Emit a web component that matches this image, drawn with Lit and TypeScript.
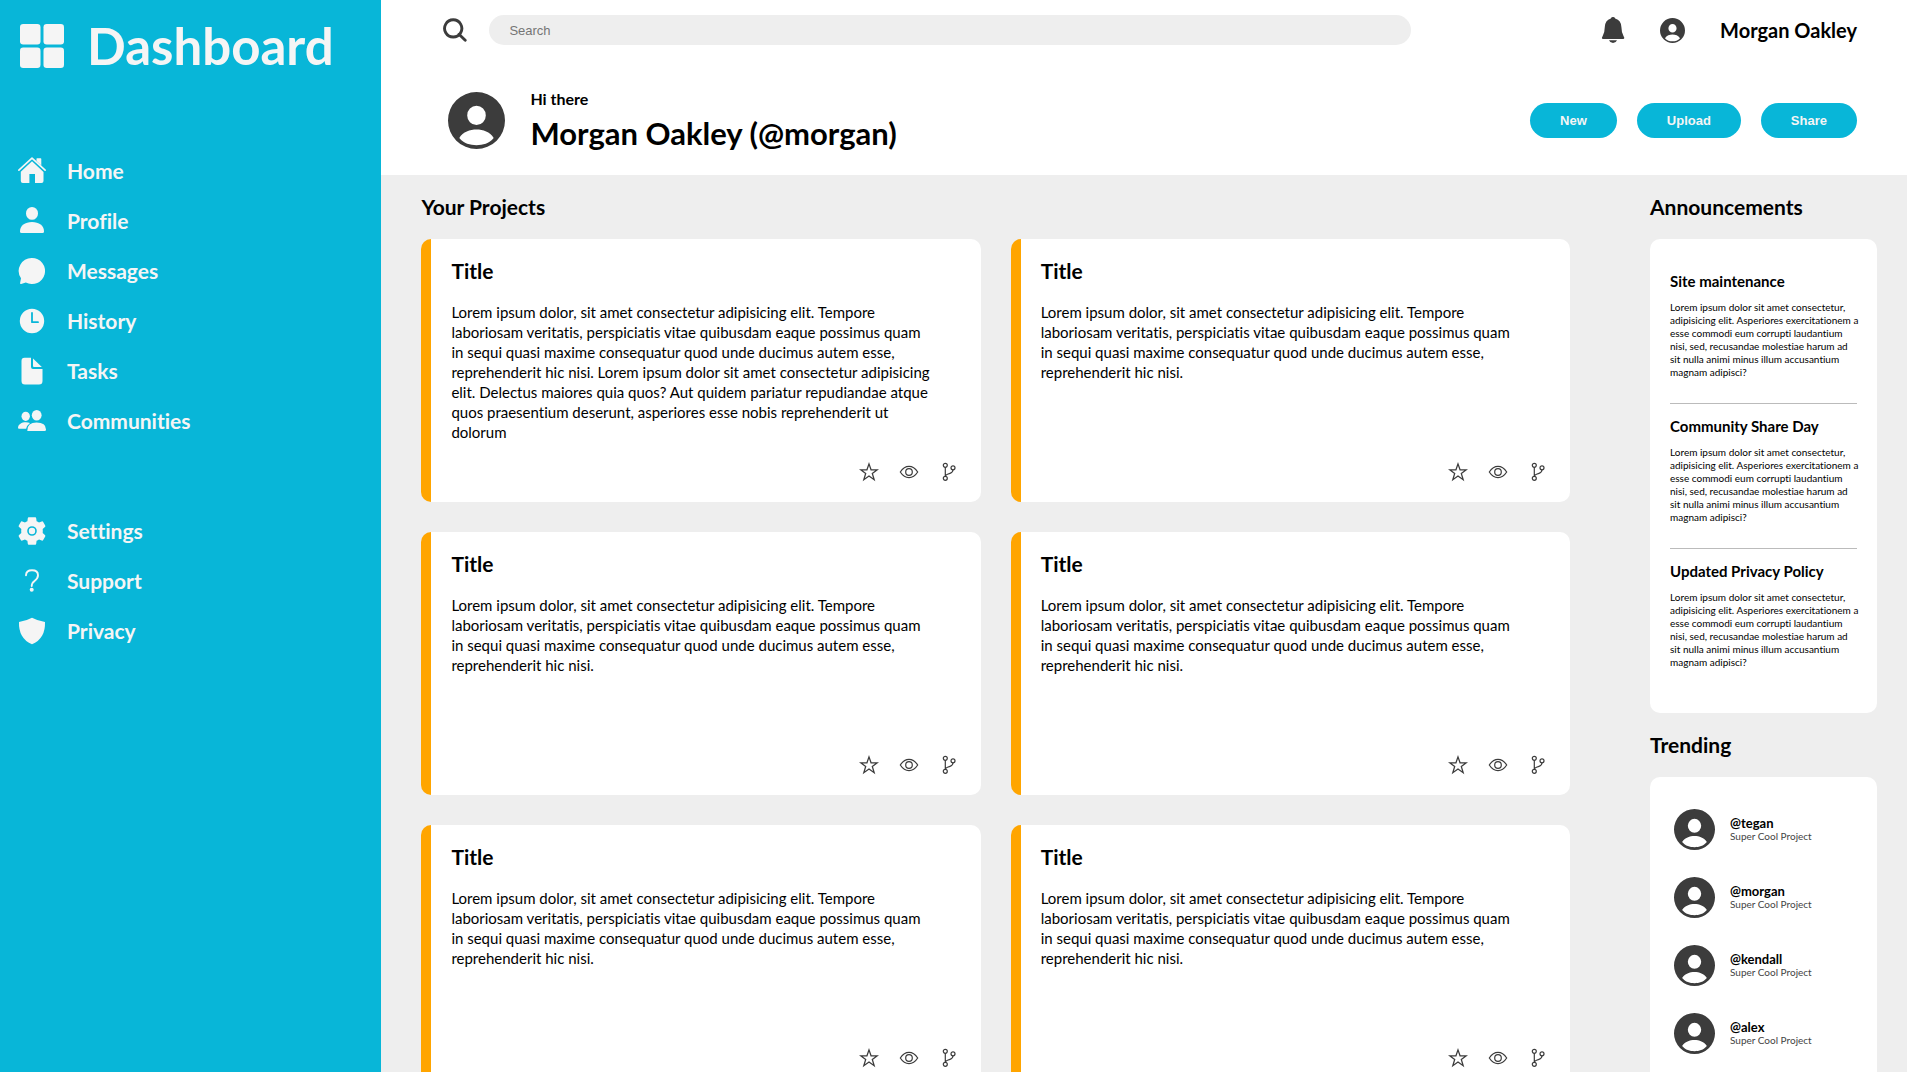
import { LitElement, html, css, svg } from "lit";
import { customElement, property } from "lit/decorators.js";

const icons = {
  logo: { box: "0 0 44 44", art: svg`<rect width="20.5" height="20.5" rx="3.2"/><rect x="23.5" width="20.5" height="20.5" rx="3.2"/><rect y="23.5" width="20.5" height="20.5" rx="3.2"/><rect x="23.5" y="23.5" width="20.5" height="20.5" rx="3.2"/>` },
  home: { box: "0 0 28 28", art: svg`<path d="M.9 13.200 14 1.200l13.100 12" fill="none" stroke="currentColor" stroke-width="1.700" stroke-linecap="round" stroke-linejoin="round"/><path d="M19 1.200h3.600q.7 0 .7.700V8.400L18.500 4V1.800q0-.6.5-.6z"/><path d="M14 4.300 25.500 14.900V24q0 2-2 2H17V17h-5.600v9H4.800q-2 0-2-2V14.700z"/>` },
  profile: { box: "0 0 28 28", art: svg`<ellipse cx="14" cy="6.400" rx="6" ry="6.400"/><path d="M2 24.500C2 18.500 7 15 14 15s12 3.500 12 9.500q0 1.500-1.500 1.500h-21Q2 26 2 24.500z"/>` },
  messages: { box: "0 0 28 28", art: svg`<path d="M14 1a13 13 0 1 1-6.200 24.400L3.200 27q-1.400.3-1.100-1.100L3 21.300A13 13 0 0 1 14 1z"/>` },
  history: { box: "0 0 28 28", art: svg`<path fill-rule="evenodd" d="M14 1.800a12.200 12.200 0 1 0 0 24.400 12.200 12.200 0 0 0 0-24.400zM13.100 6q0-.9.9-.9t.9.900v8.300H20q.9 0 .9.900t-.9.900h-6q-.9 0-.9-.9z"/>` },
  tasks: { box: "0 0 28 28", art: svg`<path d="M6.500.8H13v9.200q0 2 2 2h9.500v12q0 3.500-3.500 3.500H7Q3.500 27.500 3.500 24V4Q3.500.8 6.500.8z"/><path d="M15 1.500 23.800 10H16q-1 0-1-1z"/>` },
  communities: { box: "0 0 28 28", art: svg`<ellipse cx="7.700" cy="9.300" rx="4.200" ry="4.600"/><ellipse cx="18.700" cy="8.200" rx="4.900" ry="5.200"/><path d="M9.300 24q-.2-8.500 9.300-8.500T28 22.700q0 1.300-1.400 1.300z"/><path d="M1 21.800q-1 0-1-1C.3 17 3.700 15.200 7.700 15.200q2.500 0 4.300.7-3.100 2.300-3.900 5.900z"/>` },
  settings: { box: "0 0 28 28", art: svg`<path fill-rule="evenodd" d="M10.700.3h6.600q.8 0 .9 1l.4 3q1.200.5 2.400 1.300l2.700-1.200q1-.4 1.500.5l2 3.500q.5 1-.3 1.700l-2.200 1.800q.2 2.100 0 4.200l2.200 1.800q.8.700.3 1.700l-2 3.500q-.5.900-1.500.5L21 22.400q-1.200.8-2.400 1.300l-.4 3q-.1 1-.9 1h-6.600q-.8 0-.9-1l-.4-3q-1.200-.5-2.400-1.300l-2.700 1.200q-1 .4-1.500-.5l-2-3.500q-.5-1 .3-1.700l2.200-1.800q-.2-2.100 0-4.200L1.100 10.100q-.8-.7-.3-1.700l2-3.500q.5-.9 1.500-.5L7 5.600q1.200-.8 2.400-1.300l.4-3q.1-1 .9-1zM14 9.200a4.800 4.800 0 1 0 0 9.600 4.800 4.800 0 0 0 0-9.600z"/><circle cx="14" cy="14" r="3.200"/>` },
  support: { box: "0 0 28 28", art: svg`<path d="M8 8.300Q8.200 3.300 14 3.300q6 0 6 5 0 3-3.200 5.400Q13.700 16 13.700 19" fill="none" stroke="currentColor" stroke-width="1.900" stroke-linecap="round"/><circle cx="13.700" cy="22.800" r="2"/>` },
  privacy: { box: "0 0 28 28", art: svg`<path d="M14 .8q6 3.300 13 4.200.3 8-2.800 13.500Q20.500 25 14 27.200 7.500 25 3.800 18.500.7 13 1 5 8 4.100 14 .8z"/>` },
  search: { box: "0 0 24 24", art: svg`<path d="M10.200 1.800a8.600 8.600 0 1 0 .01 0zM16 16.200 22.200 22.200" fill="none" stroke="currentColor" stroke-width="2.900" stroke-linecap="round"/>` },
  bell: { box: "0 0 24 26", art: svg`<path d="M12 0q1.600 0 2.200 1.400 6 1.800 6.200 8.600.1 6 2.200 9.300.7 1 .7 1.700 0 .9-1.200.9H2.100Q.9 21.900.9 21q0-.7.700-1.700Q3.700 16 3.800 10 4 3.200 9.800 1.400 10.400 0 12 0z"/><path d="M8 23.300h8q-1 2.700-4 2.700t-4-2.700z"/>` },
  user: { box: "0 0 57 57", art: svg`<path fill-rule="evenodd" d="M28.500 0a28.500 28.500 0 1 0 0 57 28.500 28.500 0 0 0 0-57zM28.500 13.700a9.300 9.700 0 1 1 0 19.400 9.300 9.700 0 0 1 0-19.400zM11.300 46C15 40 22 37.600 28.500 37.600S42 40 45.700 46C41 51.500 35 53.200 28.500 53.200S16 51.500 11.300 46z"/>` },
  star: { box: "0 0 20 20", art: svg`<path d="m10 1.900 2.050 5.900h6.250l-5 3.750 1.900 6.250-5.200-3.700-5.200 3.700 1.900-6.250-5-3.750h6.250z" fill="none" stroke="currentColor" stroke-width="1.250"/>` },
  eye: { box: "0 0 20 20", art: svg`<path d="M1.300 10Q5 4.300 10 4.300T18.700 10Q15 15.700 10 15.700T1.300 10z" fill="none" stroke="currentColor" stroke-width="1.200"/><circle cx="10" cy="10" r="3.300" fill="none" stroke="currentColor" stroke-width="1.200"/>` },
  fork: { box: "0 0 20 20", art: svg`<g fill="none" stroke="currentColor" stroke-width="1.200"><circle cx="6.300" cy="3.300" r="2"/><circle cx="6.300" cy="16.300" r="2"/><circle cx="14" cy="5.800" r="2"/><path d="M6.300 5.300v9M14 7.800q-.2 2.700-3 3.600l-2.500.8q-2 .7-2.200 2.300"/></g>` },
};
type IconName = keyof typeof icons;

@customElement("app-icon")
class AppIcon extends LitElement {
  @property() name: IconName = "user";
  static styles = css`
    :host { display: block; flex: none; }
    .art { display: block; width: 100%; height: 100%; fill: currentColor; }
  `;
  render() {
    const icon = icons[this.name];
    return html`<svg class="art" viewBox=${icon.box} aria-hidden="true">${icon.art}</svg>`;
  }
}

const mainLinks: [IconName, string][] = [
  ["home", "Home"], ["profile", "Profile"], ["messages", "Messages"],
  ["history", "History"], ["tasks", "Tasks"], ["communities", "Communities"],
];
const moreLinks: [IconName, string][] = [
  ["settings", "Settings"], ["support", "Support"], ["privacy", "Privacy"],
];
const shortText = "Lorem ipsum dolor, sit amet consectetur adipisicing elit. Tempore laboriosam veritatis, perspiciatis vitae quibusdam eaque possimus quam in sequi quasi maxime consequatur quod unde ducimus autem esse, reprehenderit hic nisi.";
const longText = shortText + " Lorem ipsum dolor sit amet consectetur adipisicing elit. Delectus maiores quia quos? Aut quidem pariatur repudiandae atque quos praesentium deserunt, asperiores esse nobis reprehenderit ut dolorum";
const projects = [longText, shortText, shortText, shortText, shortText, shortText];
const notice = "Lorem ipsum dolor sit amet consectetur, adipisicing elit. Asperiores exercitationem a esse commodi eum corrupti laudantium nisi, sed, recusandae molestiae harum ad sit nulla animi minus illum accusantium magnam adipisci?";
const announcements = ["Site maintenance", "Community Share Day", "Updated Privacy Policy"];
const trending = ["@tegan", "@morgan", "@kendall", "@alex"];

@customElement("app-root")
class AppRoot extends LitElement {
  static styles = css`
    :host {
      display: grid;
      grid-template-columns: 1fr 4fr;
      grid-template-rows: auto 1fr;
      height: 100vh;
      overflow: hidden;
      font-family: Lato, "Open Sans", sans-serif;
      font-variant-ligatures: none;
      color: #000;
      background: #eee;
    }
    h1, h2, h3, p, ul { margin: 0; padding: 0; }
    ul { list-style: none; }
    button { border: 0; padding: 0; background: none; color: inherit; cursor: pointer; }

    .sidebar { grid-row: 1 / 3; background: #08b6d8; color: #f5f5f5; padding: 16px 18px; }
    .brand { display: flex; align-items: center; gap: 23px; padding-left: 2px; font-size: 51px; line-height: 60px; font-weight: 700; }
    .brand-icon { width: 44px; height: 44px; }
    .links { display: grid; gap: 22px; margin-top: 81px; }
    .links + .links { margin-top: 82px; }
    .link { display: flex; align-items: center; gap: 21px; color: inherit; text-decoration: none; font-size: 21px; line-height: 28px; font-weight: 700; }
    .link-icon { width: 28px; height: 28px; }

    .header { display: grid; gap: 47px; padding: 15px 50px 26px 62px; background: #fff; }
    .bar { display: flex; align-items: center; height: 30px; }
    .search-icon { width: 24px; height: 24px; color: #3c3c3c; }
    .search { flex: 1; min-width: 0; height: 30px; box-sizing: border-box; margin: 0 190px 0 22px; padding: 0 20px; border: 0; border-radius: 15px; background: #eee; font: 13px "Liberation Sans", sans-serif; }
    .search::placeholder { color: #757575; }
    .account { display: flex; align-items: center; gap: 35px; font-size: 20px; line-height: 30px; font-weight: 700; }
    .account-button { color: #3c3c3c; }
    .bell { width: 24px; height: 26px; }
    .face { width: 25px; height: 25px; }
    .greeting { display: flex; align-items: center; height: 57px; gap: 25px; padding-left: 5px; }
    .portrait { width: 57px; height: 57px; color: #3c3c3c; }
    .names { display: grid; gap: 5px; flex: 1; }
    .hello { font-size: 16px; line-height: 20px; font-weight: 700; }
    .full-name { font-size: 31px; line-height: 38px; font-weight: 700; }
    .actions { display: flex; gap: 20px; }
    .action { height: 35px; padding: 0 30px; border-radius: 18px; background: #08b6d8; color: #f5f5f5; font: bold 13px "Liberation Sans", sans-serif; }

    .content { display: grid; grid-template-columns: 1fr 227px; gap: 80px; align-items: start; padding: 21px 30px 20px 40px; min-height: 0; }
    .heading { font-size: 21px; line-height: 22px; font-weight: 700; margin-bottom: 21px; }
    .projects { display: grid; grid-template-columns: 1fr 1fr; grid-auto-rows: 1fr; gap: 30px; }
    .card { display: flex; flex-direction: column; box-sizing: border-box; padding: 21px 22px 20px 20px; border-left: 10px solid #ffa500; border-radius: 10px; background: #fff; }
    .card-title { font-size: 21px; line-height: 22px; font-weight: 700; margin-bottom: 20px; }
    .card-text { flex: 1; font-size: 15px; line-height: 20px; padding-right: 27px; margin-bottom: 20px; }
    .tools { display: flex; justify-content: flex-end; gap: 20px; color: #3c3c3c; }
    .tool { width: 20px; height: 20px; }

    .panel { padding: 20px; border-radius: 10px; background: #fff; margin-bottom: 21px; }
    .notice { padding: 13px 0 24px; border-bottom: 1px solid #bbb; }
    .notice:last-child { border-bottom: 0; }
    .notice-title { font-size: 15px; line-height: 18px; font-weight: 700; margin-bottom: 11px; }
    .notice-text { font-size: 10px; line-height: 13px; margin-right: -2px; }
    .people { display: grid; gap: 27px; padding: 32px 24px; }
    .person { display: flex; align-items: center; gap: 15px; }
    .person-icon { width: 41px; height: 41px; color: #3c3c3c; }
    .handle { font-size: 13px; line-height: 14px; font-weight: 700; }
    .work { font-size: 10px; line-height: 13px; color: #444; }
  `;

  links(items: [IconName, string][]) {
    return html`<ul class="links">${items.map(([icon, label]) => html`
      <li><a class="link" href="#"><app-icon class="link-icon" name=${icon}></app-icon>${label}</a></li>`)}</ul>`;
  }

  render() {
    return html`
      <nav class="sidebar">
        <h1 class="brand"><app-icon class="brand-icon" name="logo"></app-icon>Dashboard</h1>
        ${this.links(mainLinks)}
        ${this.links(moreLinks)}
      </nav>
      <header class="header">
        <div class="bar">
          <label for="search" aria-label="Search"><app-icon class="search-icon" name="search"></app-icon></label>
          <input class="search" id="search" type="search" placeholder="Search">
          <div class="account">
            <button class="account-button" aria-label="Notifications"><app-icon class="bell" name="bell"></app-icon></button>
            <button class="account-button" aria-label="Account"><app-icon class="face" name="user"></app-icon></button>
            <span>Morgan Oakley</span>
          </div>
        </div>
        <div class="greeting">
          <app-icon class="portrait" name="user"></app-icon>
          <div class="names">
            <p class="hello">Hi there</p>
            <h2 class="full-name">Morgan Oakley (@morgan)</h2>
          </div>
          <div class="actions">
            ${["New", "Upload", "Share"].map((label) => html`<button class="action">${label}</button>`)}
          </div>
        </div>
      </header>
      <main class="content">
        <section>
          <h2 class="heading">Your Projects</h2>
          <div class="projects">
            ${projects.map((text) => html`
              <article class="card">
                <h3 class="card-title">Title</h3>
                <p class="card-text">${text}</p>
                <div class="tools">
                  <button aria-label="Star"><app-icon class="tool" name="star"></app-icon></button>
                  <button aria-label="Watch"><app-icon class="tool" name="eye"></app-icon></button>
                  <button aria-label="Fork"><app-icon class="tool" name="fork"></app-icon></button>
                </div>
              </article>`)}
          </div>
        </section>
        <aside>
          <h2 class="heading">Announcements</h2>
          <div class="panel">
            ${announcements.map((title) => html`
              <article class="notice">
                <h3 class="notice-title">${title}</h3>
                <p class="notice-text">${notice}</p>
              </article>`)}
          </div>
          <h2 class="heading">Trending</h2>
          <ul class="panel people">
            ${trending.map((handle) => html`
              <li class="person">
                <app-icon class="person-icon" name="user"></app-icon>
                <div>
                  <p class="handle">${handle}</p>
                  <p class="work">Super Cool Project</p>
                </div>
              </li>`)}
          </ul>
        </aside>
      </main>`;
  }
}
